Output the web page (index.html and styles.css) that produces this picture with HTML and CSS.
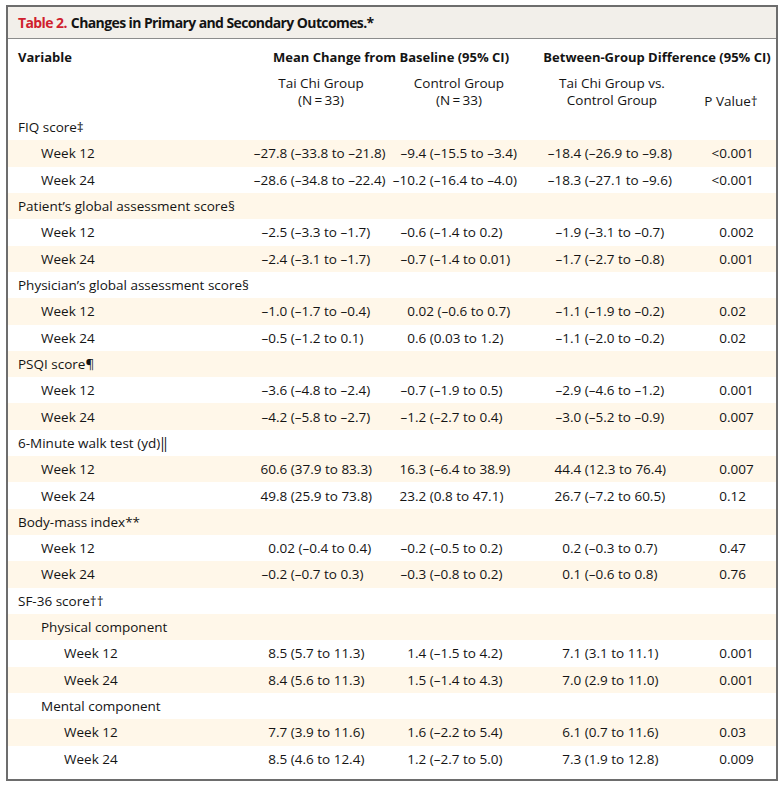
FILE: index.html
```html
<!DOCTYPE html>
<html lang="en">
<head>
<meta charset="utf-8">
<title>Table 2. Changes in Primary and Secondary Outcomes</title>
<link rel="stylesheet" href="styles.css">
</head>
<body>
<div class="frame">
  <div class="title"><span class="tnum">Table 2.</span> Changes in Primary and Secondary Outcomes.*</div>
  <table class="data">
    <colgroup>
      <col class="w-var"><col class="w-c1"><col class="w-c2"><col class="w-c3"><col class="w-c4">
    </colgroup>
    <thead>
      <tr class="h1">
        <th class="lvl1 left">Variable</th>
        <th colspan="2">Mean Change from Baseline (95% CI)</th>
        <th colspan="2" class="h-between">Between-Group Difference (95% CI)</th>
      </tr>
      <tr class="h2">
        <th></th>
        <th class="sub">Tai Chi Group<br>(N&#8201;=&#8201;33)</th>
        <th class="sub sub-c2">Control Group<br>(N&#8201;=&#8201;33)</th>
        <th class="sub">Tai Chi Group vs.<br>Control Group</th>
        <th class="sub sub-p">P Value†</th>
      </tr>
    </thead>
    <tbody>
      <tr><td class="lvl1">FIQ score‡</td><td></td><td></td><td></td><td></td></tr>
      <tr><td class="lvl2">Week 12</td><td><span class="i">–27</span>.8 (–33.8 to –21.8)</td><td><span class="i">–9</span>.4 (–15.5 to –3.4)</td><td><span class="i">–18</span>.4 (–26.9 to –9.8)</td><td><span class="i">&lt;0</span>.001</td></tr>
      <tr><td class="lvl2">Week 24</td><td><span class="i">–28</span>.6 (–34.8 to –22.4)</td><td><span class="i">–10</span>.2 (–16.4 to –4.0)</td><td><span class="i">–18</span>.3 (–27.1 to –9.6)</td><td><span class="i">&lt;0</span>.001</td></tr>

      <tr><td class="lvl1">Patient’s global assessment score§</td><td></td><td></td><td></td><td></td></tr>
      <tr><td class="lvl2">Week 12</td><td><span class="i">–2</span>.5 (–3.3 to –1.7)</td><td><span class="i">–0</span>.6 (–1.4 to 0.2)</td><td><span class="i">–1</span>.9 (–3.1 to –0.7)</td><td><span class="i">0</span>.002</td></tr>
      <tr><td class="lvl2">Week 24</td><td><span class="i">–2</span>.4 (–3.1 to –1.7)</td><td><span class="i">–0</span>.7 (–1.4 to 0.01)</td><td><span class="i">–1</span>.7 (–2.7 to –0.8)</td><td><span class="i">0</span>.001</td></tr>

      <tr><td class="lvl1">Physician’s global assessment score§</td><td></td><td></td><td></td><td></td></tr>
      <tr><td class="lvl2">Week 12</td><td><span class="i">–1</span>.0 (–1.7 to –0.4)</td><td><span class="i">0</span>.02 (–0.6 to 0.7)</td><td><span class="i">–1</span>.1 (–1.9 to –0.2)</td><td><span class="i">0</span>.02</td></tr>
      <tr><td class="lvl2">Week 24</td><td><span class="i">–0</span>.5 (–1.2 to 0.1)</td><td><span class="i">0</span>.6 (0.03 to 1.2)</td><td><span class="i">–1</span>.1 (–2.0 to –0.2)</td><td><span class="i">0</span>.02</td></tr>

      <tr><td class="lvl1">PSQI score¶</td><td></td><td></td><td></td><td></td></tr>
      <tr><td class="lvl2">Week 12</td><td><span class="i">–3</span>.6 (–4.8 to –2.4)</td><td><span class="i">–0</span>.7 (–1.9 to 0.5)</td><td><span class="i">–2</span>.9 (–4.6 to –1.2)</td><td><span class="i">0</span>.001</td></tr>
      <tr><td class="lvl2">Week 24</td><td><span class="i">–4</span>.2 (–5.8 to –2.7)</td><td><span class="i">–1</span>.2 (–2.7 to 0.4)</td><td><span class="i">–3</span>.0 (–5.2 to –0.9)</td><td><span class="i">0</span>.007</td></tr>

      <tr><td class="lvl1">6-Minute walk test (yd)‖</td><td></td><td></td><td></td><td></td></tr>
      <tr><td class="lvl2">Week 12</td><td><span class="i">60</span>.6 (37.9 to 83.3)</td><td><span class="i">16</span>.3 (–6.4 to 38.9)</td><td><span class="i">44</span>.4 (12.3 to 76.4)</td><td><span class="i">0</span>.007</td></tr>
      <tr><td class="lvl2">Week 24</td><td><span class="i">49</span>.8 (25.9 to 73.8)</td><td><span class="i">23</span>.2 (0.8 to 47.1)</td><td><span class="i">26</span>.7 (–7.2 to 60.5)</td><td><span class="i">0</span>.12</td></tr>

      <tr><td class="lvl1">Body-mass index**</td><td></td><td></td><td></td><td></td></tr>
      <tr><td class="lvl2">Week 12</td><td><span class="i">0</span>.02 (–0.4 to 0.4)</td><td><span class="i">–0</span>.2 (–0.5 to 0.2)</td><td><span class="i">0</span>.2 (–0.3 to 0.7)</td><td><span class="i">0</span>.47</td></tr>
      <tr><td class="lvl2">Week 24</td><td><span class="i">–0</span>.2 (–0.7 to 0.3)</td><td><span class="i">–0</span>.3 (–0.8 to 0.2)</td><td><span class="i">0</span>.1 (–0.6 to 0.8)</td><td><span class="i">0</span>.76</td></tr>

      <tr><td class="lvl1">SF-36 score††</td><td></td><td></td><td></td><td></td></tr>
      <tr><td class="lvl2">Physical component</td><td></td><td></td><td></td><td></td></tr>
      <tr><td class="lvl3">Week 12</td><td><span class="i">8</span>.5 (5.7 to 11.3)</td><td><span class="i">1</span>.4 (–1.5 to 4.2)</td><td><span class="i">7</span>.1 (3.1 to 11.1)</td><td><span class="i">0</span>.001</td></tr>
      <tr><td class="lvl3">Week 24</td><td><span class="i">8</span>.4 (5.6 to 11.3)</td><td><span class="i">1</span>.5 (–1.4 to 4.3)</td><td><span class="i">7</span>.0 (2.9 to 11.0)</td><td><span class="i">0</span>.001</td></tr>
      <tr><td class="lvl2">Mental component</td><td></td><td></td><td></td><td></td></tr>
      <tr><td class="lvl3">Week 12</td><td><span class="i">7</span>.7 (3.9 to 11.6)</td><td><span class="i">1</span>.6 (–2.2 to 5.4)</td><td><span class="i">6</span>.1 (0.7 to 11.6)</td><td><span class="i">0</span>.03</td></tr>
      <tr><td class="lvl3">Week 24</td><td><span class="i">8</span>.5 (4.6 to 12.4)</td><td><span class="i">1</span>.2 (–2.7 to 5.0)</td><td><span class="i">7</span>.3 (1.9 to 12.8)</td><td><span class="i">0</span>.009</td></tr>
    </tbody>
  </table>
</div>
</body>
</html>
```

FILE: styles.css
```css
html, body {
  margin: 0;
  padding: 0;
  background: #ffffff;
}

body {
  font-family: "Open Sans", "Noto Sans", sans-serif;
  font-size: 13.5px;
  color: #141414;
}

.frame {
  margin: 5px 0 0 6px;
  width: 772px;
  height: 776px;
  box-sizing: border-box;
  border: 2px solid #6d6d6d;
  background: #ffffff;
}

.title {
  height: 32px;
  box-sizing: border-box;
  border-bottom: 1px solid #8c8c8c;
  background: #f2efea;
  padding: 0 0 0 10px;
  display: flex;
  align-items: center;
  font-weight: 700;
  font-size: 14px;
  letter-spacing: -0.6px;
  color: #141414;
  white-space: nowrap;
}

.tnum {
  color: #d01f2f;
  margin-right: 4px;
}

.data {
  width: 768px;
  table-layout: fixed;
  border-collapse: collapse;
  border-spacing: 0;
}

.w-var { width: 242px; }
.w-c1 { width: 142px; }
.w-c2 { width: 140px; }
.w-c3 { width: 160px; }
.w-c4 { width: 84px; }

.data th,
.data td {
  padding: 0;
  white-space: nowrap;
}

.h1 th {
  height: 35px;
  font-weight: 700;
  font-size: 13px;
  text-align: center;
  vertical-align: middle;
}

.h1 th.left {
  text-align: left;
}

.h1 th.h-between {
  padding-left: 6px;
}

.h2 th {
  height: 40px;
  box-sizing: border-box;
  padding: 1px 0 4px 0;
  font-weight: 400;
  line-height: 17px;
  text-align: center;
  vertical-align: top;
}

.h2 th.sub-c2 {
  padding-right: 6px;
}

.h2 th.sub-p {
  vertical-align: bottom;
  padding-right: 6px;
}

.data tbody tr {
  height: 26.32px;
}

.data tbody tr:nth-child(even) {
  background: #fff7e9;
}

.data tbody td {
  vertical-align: middle;
  text-align: left;
}

.lvl1 { padding-left: 10px !important; }
.lvl2 { padding-left: 33px !important; }
.lvl3 { padding-left: 56px !important; }

.i {
  display: inline-block;
  text-align: right;
}

.data tbody td:nth-child(2) .i { width: 26px; }
.data tbody td:nth-child(3) .i { width: 23px; }
.data tbody td:nth-child(4) .i { width: 38px; }
.data tbody td:nth-child(5) .i { width: 35px; }
```
